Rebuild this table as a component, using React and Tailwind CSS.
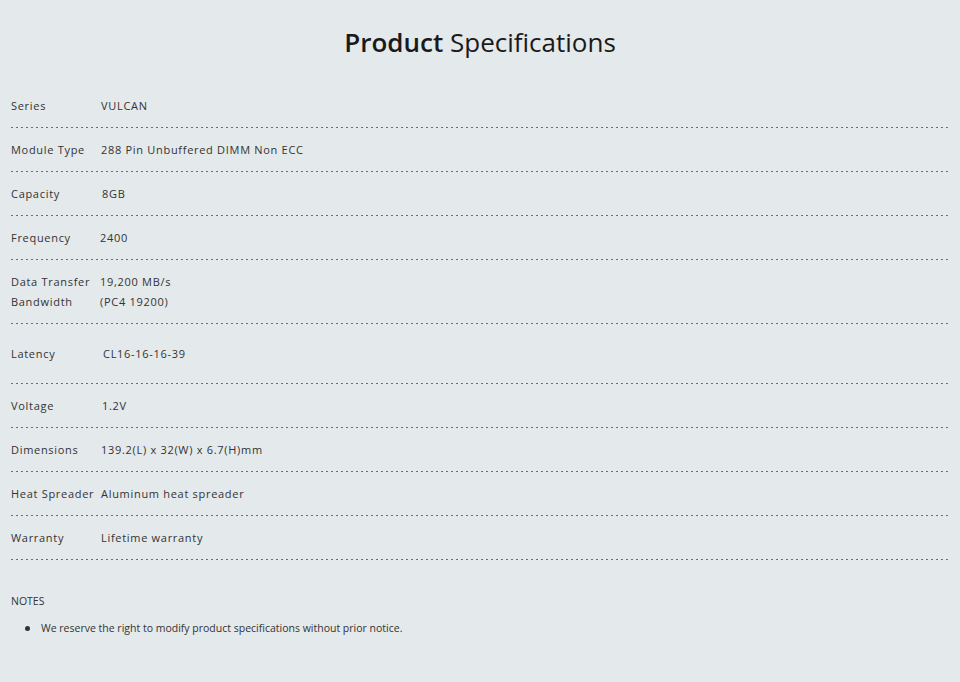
import React from "react";

const rows = [
  { label: ["Series"], value: ["VULCAN"], vx: "ml-0" },
  { label: ["Module Type"], value: ["288 Pin Unbuffered DIMM Non ECC"], vx: "ml-0" },
  { label: ["Capacity"], value: ["8GB"], vx: "ml-px" },
  { label: ["Frequency"], value: ["2400"], vx: "-ml-px" },
  { label: ["Data Transfer", "Bandwidth"], value: ["19,200 MB/s", "(PC4 19200)"], vx: "-ml-px" },
  { label: ["Latency"], value: ["CL16-16-16-39"], vx: "ml-[2px]", tall: true },
  { label: ["Voltage"], value: ["1.2V"], vx: "ml-px" },
  { label: ["Dimensions"], value: ["139.2(L) x 32(W) x 6.7(H)mm"], vx: "ml-0" },
  { label: ["Heat Spreader"], value: ["Aluminum heat spreader"], vx: "ml-0" },
  { label: ["Warranty"], value: ["Lifetime warranty"], vx: "ml-0" },
];

function Row({ r }) {
  return (
    <div>
      <div
        className={`flex text-[11px] leading-[20px] tracking-[0.7px] text-[#333] ${
          r.tall ? "pt-[20px] pb-[19px]" : "pt-[12px] pb-[11px]"
        }`}
      >
        <div className="w-[90px] shrink-0">
          {r.label.map((l) => (
            <div key={l} className="whitespace-nowrap">{l}</div>
          ))}
        </div>
        <div className={r.vx}>
          {r.value.map((v) => (
            <div key={v} className="whitespace-nowrap">{v}</div>
          ))}
        </div>
      </div>
      <div className="h-px bg-[linear-gradient(to_right,#6b7075_2px,transparent_2px)] bg-[length:5px_1px] bg-repeat-x" />
    </div>
  );
}

export default function App() {
  return (
    <div className="min-h-[682px] w-full bg-[#e4e9eb] font-['Open_Sans','Noto_Sans',sans-serif] text-[#333]">
      <div className="px-[11px]">
        <h1 className="pt-[25px] text-center text-[26px] leading-[34px] text-[#1a1a1a]">
          <span className="font-semibold">Product</span>{" "}
          <span className="font-normal">Specifications</span>
        </h1>
        <div className="mt-[25px] w-[938px]">
          {rows.map((r, i) => (
            <Row key={i} r={r} />
          ))}
        </div>
        <div className="mt-[33px] text-[10.5px] leading-[16px] text-[#333]">NOTES</div>
        <ul className="mt-[11px] text-[10.5px] leading-[16px] text-[#333]">
          <li className="flex items-center">
            <span className="ml-[14px] mr-[11px] inline-block h-[5px] w-[5px] rounded-full bg-[#333]" />
            <span>We reserve the right to modify product specifications without prior notice.</span>
          </li>
        </ul>
      </div>
    </div>
  );
}
